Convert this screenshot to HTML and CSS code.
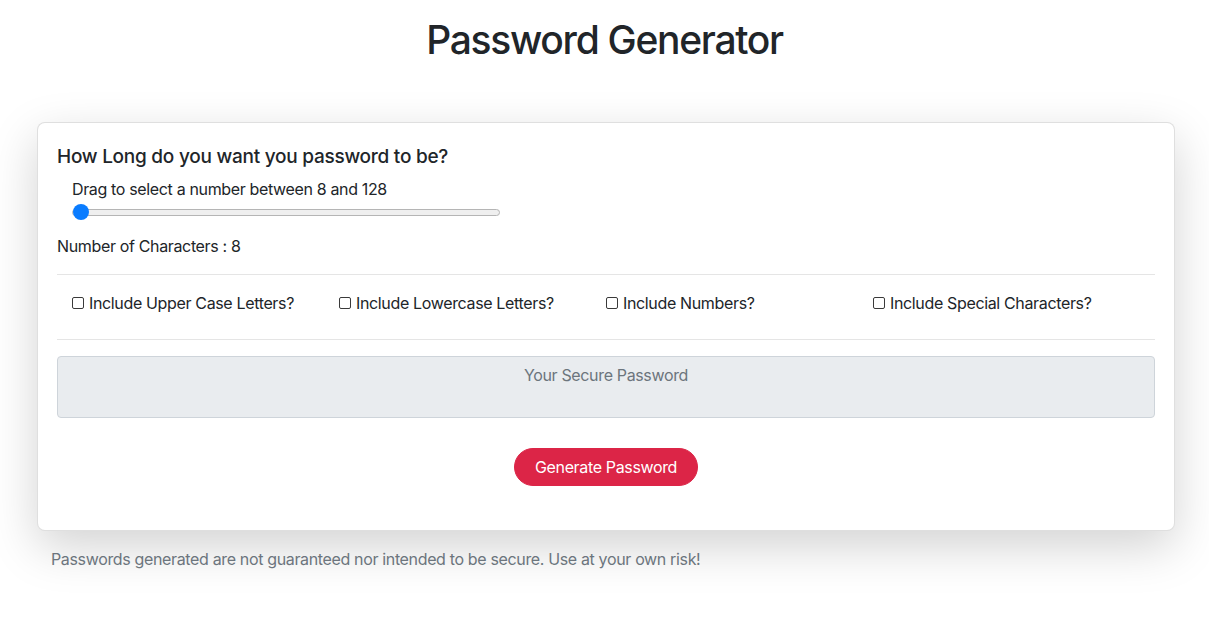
FILE: index.html
```html
<!DOCTYPE html>
<html lang="en">
<head>
<meta charset="utf-8">
<title>Password Generator</title>
<link rel="stylesheet" href="styles.css">
</head>
<body>
<h1 class="title">Password Generator</h1>
<main class="wrap">
  <section class="card">
    <h5 class="card-title">How Long do you want you password to be?</h5>
    <div class="range-group">
      <label class="range-label" for="len">Drag to select a number between 8 and 128</label>
      <input class="range" type="range" id="len" min="8" max="128" value="8">
    </div>
    <p class="count">Number of Characters : 8</p>
    <hr class="divider">
    <div class="options">
      <label class="opt"><input type="checkbox" class="check">Include Upper Case Letters?</label>
      <label class="opt"><input type="checkbox" class="check">Include Lowercase Letters?</label>
      <label class="opt"><input type="checkbox" class="check">Include Numbers?</label>
      <label class="opt"><input type="checkbox" class="check">Include Special Characters?</label>
    </div>
    <hr class="divider">
    <textarea class="output" readonly placeholder="Your Secure Password"></textarea>
    <div class="actions">
      <button class="btn" type="button">Generate Password</button>
    </div>
  </section>
  <p class="disclaimer">Passwords generated are not guaranteed nor intended to be secure. Use at your own risk!</p>
</main>
</body>
</html>
```
FILE: styles.css
```css
* { box-sizing: border-box; }
html, body { margin: 0; padding: 0; }
html { min-height: 100%; }
body {
  min-height: 100vh;
  font-family: Inter, "Noto Sans", "Liberation Sans", sans-serif;
  font-size: 16px;
  line-height: 1.5;
  letter-spacing: -0.35px;
  color: #212529;
  background: #fff;
}
.title {
  margin: 0;
  padding-top: 16px;
  font-size: 39px;
  font-weight: 500;
  line-height: 48px;
  text-align: center;
  letter-spacing: -1.3px;
}
.wrap {
  width: 1138px;
  margin: 58px 0 0 37px;
}
.card {
  background: #fff;
  border: 1px solid rgba(0,0,0,.125);
  border-radius: 8px;
  box-shadow: 0 16px 48px rgba(0,0,0,.175);
  padding: 19px 19px 44px;
}
.card-title {
  margin: 0;
  font-size: 19px;
  font-weight: 500;
  line-height: 30px;
  letter-spacing: -0.25px;
}
.range-group {
  padding-left: 15px;
  margin-top: 5px;
  display: flex;
  flex-direction: column;
}
.range-label {
  line-height: 24px;
}
.range {
  -webkit-appearance: none;
  appearance: none;
  width: 428px;
  height: 16px;
  margin: 3px 0 0;
  background: transparent;
}
.range::-webkit-slider-runnable-track {
  height: 7px;
  border: 1px solid #b5b5b5;
  border-radius: 4px;
  background: #efefef;
}
.range::-webkit-slider-thumb {
  -webkit-appearance: none;
  width: 16px;
  height: 16px;
  border-radius: 50%;
  background: #0a7cff;
  margin-top: -5.5px;
}
.count {
  margin: 14px 0 0;
  line-height: 24px;
}
.divider {
  margin: 16px 0;
  border: 0;
  border-top: 1px solid rgba(0,0,0,.1);
}
.options {
  display: grid;
  grid-template-columns: repeat(4, 267px);
  padding-left: 15px;
  padding-top: 0;
  padding-bottom: 8px;
}
.opt {
  display: flex;
  align-items: center;
  line-height: 24px;
}
.check {
  -webkit-appearance: none;
  appearance: none;
  width: 12px;
  height: 12px;
  margin: 0 5px 0 0;
  border: 1px solid #3a3a3a;
  border-radius: 2px;
  background: #fff;
}
.output {
  display: block;
  width: 100%;
  height: 62px;
  margin: 0;
  padding: 6px 12px;
  border: 1px solid #ced4da;
  border-radius: 4px;
  background: #e9ecef;
  font: inherit;
  letter-spacing: inherit;
  text-align: center;
  resize: none;
  color: #495057;
}
.output::placeholder { color: #6c757d; }
.actions {
  display: flex;
  justify-content: center;
  margin-top: 30px;
}
.btn {
  font: inherit;
  letter-spacing: inherit;
  color: #fff;
  background: #dc2547;
  border: 1px solid #dc2547;
  border-radius: 20px;
  height: 38px;
  padding: 0 20px;
  line-height: 24px;
}
.disclaimer {
  margin: 16px 0 0 14px;
  color: #6c757d;
  line-height: 24px;
}
```
